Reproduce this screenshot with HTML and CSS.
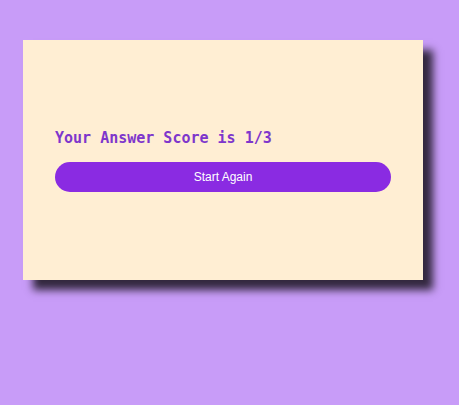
FILE: index.html
```html
<!DOCTYPE html>
<html>
<head>
<meta charset="utf-8">
<link rel="stylesheet" href="styles.css">
</head>
<body>
<div class="card">
  <h2 class="score">Your Answer Score is 1/3</h2>
  <button class="restart">Start Again</button>
</div>
</body>
</html>
```
FILE: styles.css
```css
html, body {
  margin: 0;
  padding: 0;
}
body {
  background: #c89cf8;
  width: 459px;
  height: 405px;
  padding: 40px 0 0 23px;
  box-sizing: border-box;
}
.card {
  width: 400px;
  height: 240px;
  box-sizing: border-box;
  background: #ffeed3;
  box-shadow: 10px 10px 8px rgba(0, 0, 0, 0.75);
  padding: 0 32px;
  display: flex;
  flex-direction: column;
  justify-content: center;
}
.score {
  margin: 0 0 14px;
  font-family: "DejaVu Sans Mono", "Liberation Mono", monospace;
  font-weight: bold;
  font-size: 15px;
  line-height: 20px;
  color: #7e36cc;
}
.restart {
  width: 100%;
  height: 30px;
  border: none;
  border-radius: 15px;
  background: #8a2be2;
  color: #fff;
  font-family: "Liberation Sans", Arial, sans-serif;
  font-size: 12px;
  padding: 0;
}
```
